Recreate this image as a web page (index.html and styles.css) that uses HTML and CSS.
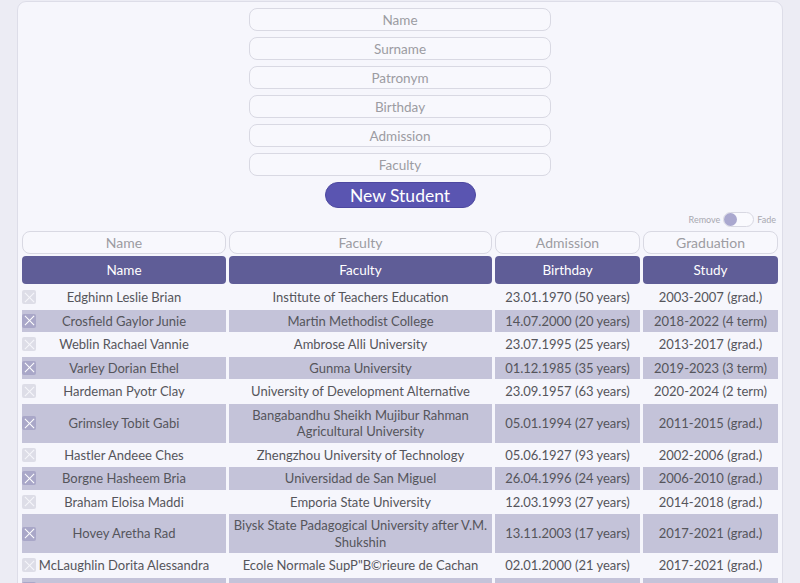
FILE: index.html
```html
<!DOCTYPE html>
<html lang="en">
<head>
<meta charset="utf-8">
<title>Students</title>
<link rel="stylesheet" href="styles.css">
</head>
<body>
<main class="card">
  <form class="new-form">
    <input class="field" placeholder="Name">
    <input class="field" placeholder="Surname">
    <input class="field" placeholder="Patronym">
    <input class="field" placeholder="Birthday">
    <input class="field" placeholder="Admission">
    <input class="field" placeholder="Faculty">
    <button type="button" class="btn">New Student</button>
  </form>
  <div class="toggle-row">
    <span class="tlabel">Remove</span>
    <span class="switch"><span class="knob"></span></span>
    <span class="tlabel">Fade</span>
  </div>
  <div class="table">
    <input class="filter" placeholder="Name">
    <input class="filter" placeholder="Faculty">
    <input class="filter" placeholder="Admission">
    <input class="filter" placeholder="Graduation">

    <div class="th">Name</div>
    <div class="th">Faculty</div>
    <div class="th">Birthday</div>
    <div class="th">Study</div>

    <div class="td name"><span class="chk"></span><span class="txt">Edghinn Leslie Brian</span></div>
    <div class="td">Institute of Teachers Education</div>
    <div class="td">23.01.1970 (50 years)</div>
    <div class="td">2003-2007 (grad.)</div>

    <div class="td name alt"><span class="chk"></span><span class="txt">Crosfield Gaylor Junie</span></div>
    <div class="td alt">Martin Methodist College</div>
    <div class="td alt">14.07.2000 (20 years)</div>
    <div class="td alt">2018-2022 (4 term)</div>

    <div class="td name"><span class="chk"></span><span class="txt">Weblin Rachael Vannie</span></div>
    <div class="td">Ambrose Alli University</div>
    <div class="td">23.07.1995 (25 years)</div>
    <div class="td">2013-2017 (grad.)</div>

    <div class="td name alt"><span class="chk"></span><span class="txt">Varley Dorian Ethel</span></div>
    <div class="td alt">Gunma University</div>
    <div class="td alt">01.12.1985 (35 years)</div>
    <div class="td alt">2019-2023 (3 term)</div>

    <div class="td name"><span class="chk"></span><span class="txt">Hardeman Pyotr Clay</span></div>
    <div class="td">University of Development Alternative</div>
    <div class="td">23.09.1957 (63 years)</div>
    <div class="td">2020-2024 (2 term)</div>

    <div class="td name alt"><span class="chk"></span><span class="txt">Grimsley Tobit Gabi</span></div>
    <div class="td alt">Bangabandhu Sheikh Mujibur Rahman Agricultural University</div>
    <div class="td alt">05.01.1994 (27 years)</div>
    <div class="td alt">2011-2015 (grad.)</div>

    <div class="td name"><span class="chk"></span><span class="txt">Hastler Andeee Ches</span></div>
    <div class="td">Zhengzhou University of Technology</div>
    <div class="td">05.06.1927 (93 years)</div>
    <div class="td">2002-2006 (grad.)</div>

    <div class="td name alt"><span class="chk"></span><span class="txt">Borgne Hasheem Bria</span></div>
    <div class="td alt">Universidad de San Miguel</div>
    <div class="td alt">26.04.1996 (24 years)</div>
    <div class="td alt">2006-2010 (grad.)</div>

    <div class="td name"><span class="chk"></span><span class="txt">Braham Eloisa Maddi</span></div>
    <div class="td">Emporia State University</div>
    <div class="td">12.03.1993 (27 years)</div>
    <div class="td">2014-2018 (grad.)</div>

    <div class="td name alt"><span class="chk"></span><span class="txt">Hovey Aretha Rad</span></div>
    <div class="td alt">Biysk State Padagogical University after V.M. Shukshin</div>
    <div class="td alt">13.11.2003 (17 years)</div>
    <div class="td alt">2017-2021 (grad.)</div>

    <div class="td name"><span class="chk"></span><span class="txt">McLaughlin Dorita Alessandra</span></div>
    <div class="td">Ecole Normale SupP"B©rieure de Cachan</div>
    <div class="td">02.01.2000 (21 years)</div>
    <div class="td">2017-2021 (grad.)</div>

    <div class="td name alt"><span class="chk"></span><span class="txt"></span></div>
    <div class="td alt"></div>
    <div class="td alt"></div>
    <div class="td alt"></div>
  </div>
</main>
</body>
</html>
```

FILE: styles.css
```css
html { overflow: hidden; }
body {
  margin: 0;
  background: #ececf4;
  font-family: Lato, "Open Sans", sans-serif;
  font-size: 13px;
  color: #55555b;
}
.card {
  margin: 1px 17px 0 17px;
  background: #f6f6fc;
  border: 1px solid #dddde8;
  border-radius: 9px;
  padding: 6px 4px 0 4px;
  min-height: 700px;
}
.new-form {
  display: flex;
  flex-direction: column;
  align-items: center;
  gap: 6px;
}
.field, .filter {
  box-sizing: border-box;
  height: 23px;
  border: 1px solid #d9d9e3;
  border-radius: 8px;
  background: #f8f8fd;
  text-align: center;
  font-family: inherit;
  font-size: 13.5px;
  padding: 0;
  outline: none;
}
.field { width: 302px; }
.field::placeholder, .filter::placeholder { color: #9c9ca2; }
.btn {
  width: 151px;
  height: 26px;
  border-radius: 13px;
  border: 1px solid #4d48a0;
  background: #5a55b1;
  color: #fff;
  font-family: inherit;
  font-size: 17.5px;
  padding: 0;
}
.toggle-row {
  display: flex;
  justify-content: flex-end;
  align-items: center;
  gap: 3px;
  height: 15px;
  margin: 4px 2px 4px 0;
}
.tlabel { font-size: 9px; color: #a8a8b0; }
.switch {
  box-sizing: border-box;
  width: 31px;
  height: 15px;
  border: 1px solid #d8d8e2;
  border-radius: 8px;
  background: #fafafe;
  display: flex;
  align-items: center;
}
.knob {
  width: 13px;
  height: 13px;
  border-radius: 50%;
  background: #aaa8cf;
}
.table {
  display: grid;
  grid-template-columns: 204px 263px 145px 135px;
  column-gap: 3px;
  row-gap: 1px;
}
.filter { width: 100%; font-size: 14px; margin-bottom: 1px; }
.th {
  height: 28px;
  line-height: 28px;
  background: #5f5d97;
  color: #fff;
  border-radius: 4px;
  text-align: center;
  font-size: 13.5px;
  margin-bottom: 1px;
}
.td {
  padding: 3px 2px;
  line-height: 16.5px;
  min-height: 16.5px;
  text-align: center;
  display: flex;
  align-items: center;
  justify-content: center;
}
.alt { background: #c4c3d9; }
.name {
  display: grid;
  grid-template-columns: 100%;
  justify-content: stretch;
  padding: 3px 0;
}
.name > * { grid-area: 1 / 1; }
.txt { justify-self: center; align-self: center; white-space: nowrap; }
.chk {
  justify-self: start;
  align-self: center;
  width: 14px;
  height: 14px;
  border-radius: 2px;
  background: #dddde7;
  position: relative;
}
.chk::before, .chk::after {
  content: "";
  position: absolute;
  left: 6.5px;
  top: 0.5px;
  width: 1.2px;
  height: 13px;
  background: #f6f6fb;
  transform: rotate(45deg);
}
.chk::after { transform: rotate(-45deg); }
.alt .chk { background: #a9a7c8; }
.alt .chk::before, .alt .chk::after { background: #ffffff; }
```
